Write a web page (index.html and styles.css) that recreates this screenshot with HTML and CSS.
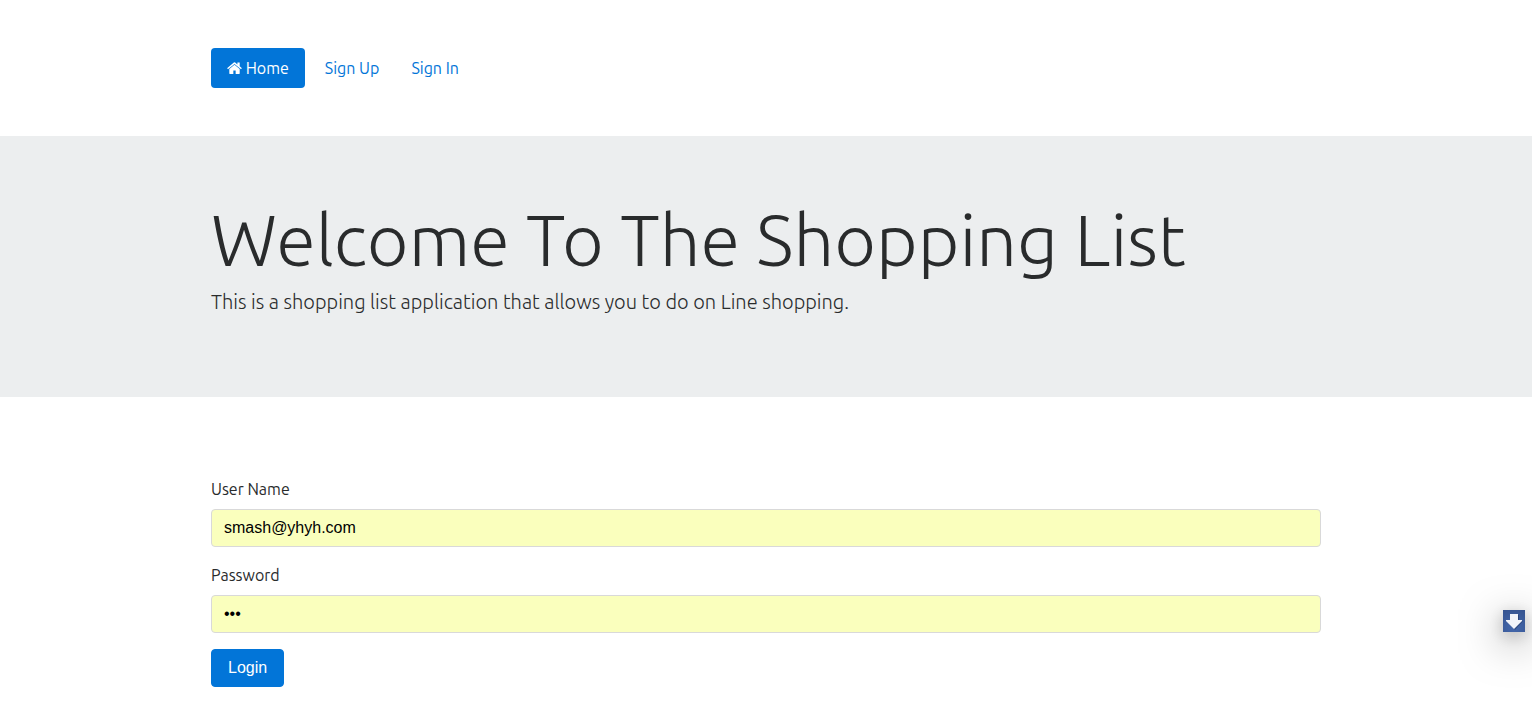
FILE: index.html
```html
<!DOCTYPE html>
<html lang="en">
<head>
<meta charset="utf-8">
<title>Shopping List</title>
<link rel="stylesheet" href="styles.css">
</head>
<body>
<header class="container site-header">
  <nav class="nav-pills">
    <a class="nav-link active" href="#"><svg class="home-icon" viewBox="0 0 1664 1312" aria-hidden="true"><path d="M1408 768v480q0 26-19 45t-45 19H960V928H704v384H320q-26 0-45-19t-19-45V768q0-1 .5-3t.5-3l575-474 575 474q1 2 1 6zm223-69-62 74q-8 9-21 11h-3q-13 0-21-7L832 200 140 777q-12 8-24 7-13-2-21-11l-62-74q-8-10-7-23.500t11-21.500L756 55q32-26 76-26t76 26l244 204V64q0-14 9-23t23-9h192q14 0 23 9t9 23v408l219 182q10 8 11 21.500t-7 23.500z"/></svg> Home</a>
    <a class="nav-link" href="#signup">Sign Up</a>
    <a class="nav-link" href="#signin">Sign In</a>
  </nav>
</header>
<section class="jumbotron">
  <div class="container">
    <h1 class="title">Welcome To The Shopping List</h1>
    <p class="lead">This is a shopping list application that allows you to do on Line shopping.</p>
  </div>
</section>
<main class="container login">
  <form class="login-form">
    <div class="form-group">
      <label for="username">User Name</label>
      <input class="form-control" id="username" type="text" value="smash@yhyh.com">
    </div>
    <div class="form-group">
      <label for="password">Password</label>
      <input class="form-control" id="password" type="password" value="abc">
    </div>
    <button class="btn" type="submit">Login</button>
  </form>
</main>
<button class="download" type="button" aria-label="Download"><svg viewBox="0 0 22 22" aria-hidden="true"><path fill="#1f3768" d="M8 5h8v6h4l-8 9-8-9h4z" opacity=".6"/><path fill="#f1f4fa" d="M7 4h8v6h4v1l-8 8-8-8v-1h4z"/></svg></button>
</body>
</html>
```
FILE: styles.css
```css
* { box-sizing: border-box; }
body {
  margin: 0;
  background: #fff;
  color: #292b2c;
  font: 16px/24px Ubuntu, "Open Sans", "Noto Sans", sans-serif;
}
.container {
  max-width: 1140px;
  margin: 0 auto;
  padding: 0 15px;
}
.site-header { padding-top: 48px; padding-bottom: 48px; }
.nav-pills { display: flex; }
.nav-link {
  padding: 8px 16px;
  border-radius: 4px;
  color: #0275d8;
  text-decoration: none;
}
.nav-link.active { margin-right: 4px; background: #0275d8; color: #fff; }
.home-icon { width: 15px; height: 12px; fill: currentColor; }
.jumbotron { padding: 64px 0; background: #eceeef; }
.title { margin: 0 0 8px; font-size: 72px; line-height: 79px; font-weight: 300; }
.lead { margin: 0 0 16px; font-size: 20px; line-height: 30px; font-weight: 300; }
.login { padding-top: 80px; }
.form-group { margin-bottom: 16px; }
.form-group label { display: block; margin-bottom: 8px; }
.form-control {
  display: block;
  width: 100%;
  padding: 6px 12px;
  border: 1px solid #d9d9d9;
  border-radius: 4px;
  background: #faffbd;
  color: #000;
  font: 16px/24px "Liberation Sans", sans-serif;
}
.btn {
  padding: 6px 16px;
  border: 1px solid #0275d8;
  border-radius: 4px;
  background: #0275d8;
  color: #fff;
  font: 16px/24px "Liberation Sans", sans-serif;
}
.download {
  position: fixed;
  right: 7px;
  bottom: 82px;
  width: 22px;
  height: 22px;
  padding: 0;
  border: 0;
  background: radial-gradient(circle at 50% 80%, #4468ac, #35538f);
  box-shadow: 0 10px 40px rgba(0, 0, 0, .5), 0 4px 16px rgba(0, 0, 0, .2);
}
.download svg { display: block; }
```
